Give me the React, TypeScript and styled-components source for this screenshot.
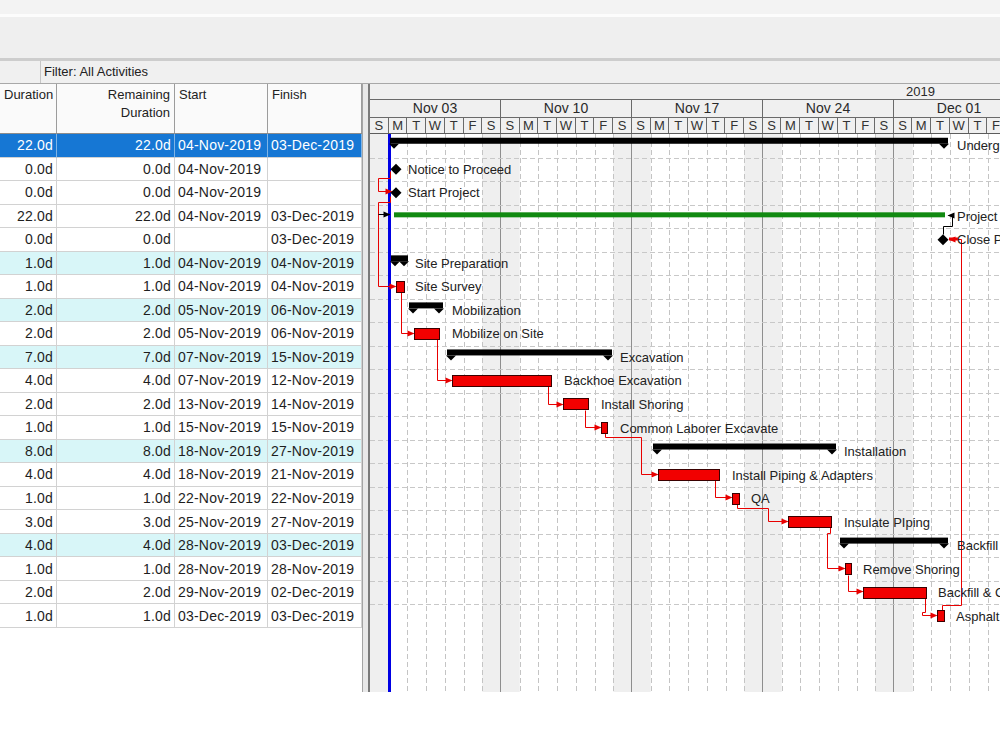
import styled, { createGlobalStyle } from "styled-components";

const DAY = 131 / 7;
const ROW_H = 23.52;
const X0 = 370;
const Y0 = 134;
const CHART_W = 630;
const BODY_H = 558;

const GlobalStyle = createGlobalStyle`
  * { box-sizing: border-box; }
  body {
    margin: 0;
    background: #fff;
    font-family: "Liberation Sans", Arial, sans-serif;
  }
`;

type Kind = "selected" | "wbs" | "plain";
type Bar =
  | { type: "summary"; x1: number; x2: number }
  | { type: "task"; x1: number; x2: number }
  | { type: "green"; x1: number; x2: number }
  | { type: "milestone"; x: number };

interface Activity {
  dur: string;
  rem: string;
  start: string;
  finish: string;
  kind: Kind;
  bar: Bar;
  label: string;
  lx: number;
}

const activities: Activity[] = [
  { dur: "22.0d", rem: "22.0d", start: "04-Nov-2019", finish: "03-Dec-2019", kind: "selected", bar: { type: "summary", x1: 390, x2: 948 }, label: "Underground Utilities", lx: 957 },
  { dur: "0.0d", rem: "0.0d", start: "04-Nov-2019", finish: "", kind: "plain", bar: { type: "milestone", x: 396 }, label: "Notice to Proceed", lx: 408 },
  { dur: "0.0d", rem: "0.0d", start: "04-Nov-2019", finish: "", kind: "plain", bar: { type: "milestone", x: 396 }, label: "Start Project", lx: 408 },
  { dur: "22.0d", rem: "22.0d", start: "04-Nov-2019", finish: "03-Dec-2019", kind: "plain", bar: { type: "green", x1: 394, x2: 945 }, label: "Project Complete", lx: 957 },
  { dur: "0.0d", rem: "0.0d", start: "", finish: "03-Dec-2019", kind: "plain", bar: { type: "milestone", x: 943 }, label: "Close Project", lx: 957 },
  { dur: "1.0d", rem: "1.0d", start: "04-Nov-2019", finish: "04-Nov-2019", kind: "wbs", bar: { type: "summary", x1: 391, x2: 408 }, label: "Site Preparation", lx: 415 },
  { dur: "1.0d", rem: "1.0d", start: "04-Nov-2019", finish: "04-Nov-2019", kind: "plain", bar: { type: "task", x1: 396, x2: 404 }, label: "Site Survey", lx: 415 },
  { dur: "2.0d", rem: "2.0d", start: "05-Nov-2019", finish: "06-Nov-2019", kind: "wbs", bar: { type: "summary", x1: 409, x2: 443 }, label: "Mobilization", lx: 452 },
  { dur: "2.0d", rem: "2.0d", start: "05-Nov-2019", finish: "06-Nov-2019", kind: "plain", bar: { type: "task", x1: 414, x2: 439 }, label: "Mobilize on Site", lx: 452 },
  { dur: "7.0d", rem: "7.0d", start: "07-Nov-2019", finish: "15-Nov-2019", kind: "wbs", bar: { type: "summary", x1: 447, x2: 612 }, label: "Excavation", lx: 620 },
  { dur: "4.0d", rem: "4.0d", start: "07-Nov-2019", finish: "12-Nov-2019", kind: "plain", bar: { type: "task", x1: 452, x2: 551 }, label: "Backhoe Excavation", lx: 564 },
  { dur: "2.0d", rem: "2.0d", start: "13-Nov-2019", finish: "14-Nov-2019", kind: "plain", bar: { type: "task", x1: 563, x2: 588 }, label: "Install Shoring", lx: 601 },
  { dur: "1.0d", rem: "1.0d", start: "15-Nov-2019", finish: "15-Nov-2019", kind: "plain", bar: { type: "task", x1: 601, x2: 607 }, label: "Common Laborer Excavate", lx: 620 },
  { dur: "8.0d", rem: "8.0d", start: "18-Nov-2019", finish: "27-Nov-2019", kind: "wbs", bar: { type: "summary", x1: 653, x2: 836 }, label: "Installation", lx: 844 },
  { dur: "4.0d", rem: "4.0d", start: "18-Nov-2019", finish: "21-Nov-2019", kind: "plain", bar: { type: "task", x1: 658, x2: 719 }, label: "Install Piping & Adapters", lx: 732 },
  { dur: "1.0d", rem: "1.0d", start: "22-Nov-2019", finish: "22-Nov-2019", kind: "plain", bar: { type: "task", x1: 732, x2: 739 }, label: "QA", lx: 751 },
  { dur: "3.0d", rem: "3.0d", start: "25-Nov-2019", finish: "27-Nov-2019", kind: "plain", bar: { type: "task", x1: 788, x2: 831 }, label: "Insulate PIping", lx: 844 },
  { dur: "4.0d", rem: "4.0d", start: "28-Nov-2019", finish: "03-Dec-2019", kind: "wbs", bar: { type: "summary", x1: 840, x2: 948 }, label: "Backfill", lx: 957 },
  { dur: "1.0d", rem: "1.0d", start: "28-Nov-2019", finish: "28-Nov-2019", kind: "plain", bar: { type: "task", x1: 845, x2: 851 }, label: "Remove Shoring", lx: 863 },
  { dur: "2.0d", rem: "2.0d", start: "29-Nov-2019", finish: "02-Dec-2019", kind: "plain", bar: { type: "task", x1: 863, x2: 926 }, label: "Backfill & C", lx: 938 },
  { dur: "1.0d", rem: "1.0d", start: "03-Dec-2019", finish: "03-Dec-2019", kind: "plain", bar: { type: "task", x1: 937, x2: 944 }, label: "Asphalt", lx: 956 },
];

// relationship lines, page coordinates
type Link = { pts: [number, number][]; color: string; dir: "r" | "l" };
const RED = "#e80000";
const links: Link[] = [
  { pts: [[390, 171], [390, 178], [378, 178], [378, 191], [391, 191]], color: RED, dir: "r" },
  { pts: [[390, 196], [390, 202], [378, 202], [378, 286], [395, 286]], color: RED, dir: "r" },
  { pts: [[401, 292], [401, 333], [413, 333]], color: RED, dir: "r" },
  { pts: [[437, 339], [437, 380], [451, 380]], color: RED, dir: "r" },
  { pts: [[548, 386], [548, 404], [562, 404]], color: RED, dir: "r" },
  { pts: [[585, 410], [585, 427], [600, 427]], color: RED, dir: "r" },
  { pts: [[605, 433], [605, 437], [641, 437], [641, 474], [657, 474]], color: RED, dir: "r" },
  { pts: [[715, 480], [715, 497], [731, 497]], color: RED, dir: "r" },
  { pts: [[737, 504], [737, 508], [768, 508], [768, 521], [787, 521]], color: RED, dir: "r" },
  { pts: [[830, 527], [830, 533], [827, 533], [827, 568], [844, 568]], color: RED, dir: "r" },
  { pts: [[848, 575], [848, 591], [862, 591]], color: RED, dir: "r" },
  { pts: [[925, 598], [925, 612], [922, 612], [922, 615], [936, 615]], color: RED, dir: "r" },
  { pts: [[942, 610], [942, 605], [961, 605], [961, 239], [949, 239]], color: RED, dir: "l" },
  { pts: [[943, 234], [943, 226], [952, 226], [952, 215], [948, 215]], color: "#000", dir: "l" },
  { pts: [[378, 214], [389, 214]], color: "#000", dir: "r" },
];

const weeks = ["Nov 03", "Nov 10", "Nov 17", "Nov 24", "Dec 01"];
const dayLetters = ["S", "M", "T", "W", "T", "F", "S"];

const Page = styled.div`
  width: 1000px;
  height: 750px;
  background: #fff;
  overflow: hidden;
  color: #1e1e1e;
`;

const TopStrip = styled.div`
  height: 17px;
  background: #f3f3f3;
  border-bottom: 3px solid #fcfcfc;
`;

const Toolbar = styled.div`
  height: 44px;
  background: #efefef;
  border-bottom: 3px solid #cdcdcd;
`;

const FilterBar = styled.div`
  height: 23px;
  display: flex;
  background: #f0f0f0;
  border-bottom: 1px solid #a8a8a8;
  font-size: 13px;
`;

const FilterBlank = styled.div`
  width: 41px;
  border-right: 1px solid #c6c6c6;
`;

const FilterText = styled.div`
  padding-left: 3px;
  line-height: 22px;
  color: #222;
`;

const Main = styled.div`
  display: flex;
  height: 608px;
`;

const TablePane = styled.div`
  width: 362px;
  display: flex;
  flex-direction: column;
`;

const cols = "57px 118px 93px 94px";

const HeadRow = styled.div`
  display: grid;
  grid-template-columns: ${cols};
  height: 50px;
  background: #fafafa;
  border-bottom: 1px solid #8c8c8c;
`;

const HeadCell = styled.div<{ $right?: boolean }>`
  border-right: 1px solid #9c9c9c;
  padding: 2px 4px 0 4px;
  font-size: 13px;
  line-height: 18px;
  text-align: ${(p) => (p.$right ? "right" : "left")};
  color: #222;
`;

const rowBg: Record<Kind, string> = {
  selected: "#1677d4",
  wbs: "#d8f6f8",
  plain: "#fff",
};

const BodyRow = styled.div<{ $kind: Kind }>`
  display: grid;
  grid-template-columns: ${cols};
  height: ${ROW_H}px;
  background: ${(p) => rowBg[p.$kind]};
  color: ${(p) => (p.$kind === "selected" ? "#fff" : "#1e1e1e")};
`;

const Cell = styled.div<{ $right?: boolean; $sel?: boolean }>`
  border-right: 1px solid ${(p) => (p.$sel ? "#7fb4e6" : "#d2d2d2")};
  border-bottom: 1px solid #d2d2d2;
  padding: 0 3px 0 3px;
  font-size: 14px;
  letter-spacing: 0.2px;
  display: flex;
  align-items: center;
  justify-content: ${(p) => (p.$right ? "flex-end" : "flex-start")};
  white-space: nowrap;
  overflow: hidden;
`;

const Splitter = styled.div`
  width: 8px;
  background: #e8e8e8;
  border-left: 1px solid #a4a4a4;
  border-right: 2px solid #7a7a7a;
`;

const ChartPane = styled.div`
  width: ${CHART_W}px;
  display: flex;
  flex-direction: column;
  overflow: hidden;
`;

const TimeHeader = styled.div`
  height: 50px;
  background: #f0f0f0;
  color: #2a2a2a;
  border-bottom: 1px solid #5c5c5c;
`;

const YearRow = styled.div`
  height: 16px;
  border-bottom: 1px solid #6a6a6a;
  font-size: 13px;
  line-height: 15px;
  padding-left: 536px;
`;

const WeekRow = styled.div`
  display: grid;
  grid-template-columns: repeat(5, 131px);
  height: 18px;
  border-bottom: 1px solid #6a6a6a;
`;

const WeekCell = styled.div`
  border-right: 1px solid #6a6a6a;
  text-align: center;
  font-size: 14px;
  line-height: 17px;
`;

const DayRow = styled.div`
  display: grid;
  grid-template-columns: repeat(35, ${DAY}px);
  height: 15px;
`;

const DayCell = styled.div`
  border-right: 1px solid #6a6a6a;
  text-align: center;
  font-size: 13px;
  line-height: 15px;
  color: #333;
`;

const ChartBody = styled.svg`
  display: block;
  width: ${CHART_W}px;
  height: ${BODY_H}px;
  overflow: hidden;
  font-family: "Liberation Sans", Arial, sans-serif;
`;

const rx = (x: number) => x - X0;
const ry = (y: number) => y - Y0;
const cyOf = (i: number) => ROW_H * (i + 0.5);
const px = (v: number) => Math.round(v) + 0.5;

function BarShape({ bar, cy }: { bar: Bar; cy: number }) {
  if (bar.type === "milestone") {
    const x = rx(bar.x);
    return <polygon points={`${x},${cy - 5.5} ${x + 5.5},${cy} ${x},${cy + 5.5} ${x - 5.5},${cy}`} fill="#000" />;
  }
  const x1 = rx(bar.x1);
  const x2 = rx(bar.x2);
  if (bar.type === "summary") {
    const top = cy - 8;
    const bot = cy - 2;
    return (
      <g fill="#000">
        <rect x={x1} y={top} width={x2 - x1} height={bot - top} />
        <polygon points={`${x1 - 1},${bot} ${x1 + 9},${bot} ${x1 + 4},${bot + 5}`} />
        <polygon points={`${x2 - 9},${bot} ${x2 + 1},${bot} ${x2 - 4},${bot + 5}`} />
      </g>
    );
  }
  if (bar.type === "green") {
    return <rect x={x1} y={cy - 4} width={x2 - x1} height={5} fill="#118a11" />;
  }
  return <rect x={x1 + 0.5} y={Math.round(cy - 6) + 0.5} width={x2 - x1} height={11} fill="#f20000" stroke="#3a0000" strokeWidth={1} />;
}

function LinkLine({ link }: { link: Link }) {
  const pts = link.pts.map(([x, y]) => [px(rx(x)), px(ry(y))] as [number, number]);
  const [ex, ey] = pts[pts.length - 1];
  const head =
    link.dir === "r"
      ? `${ex + 1},${ey} ${ex - 6},${ey - 3} ${ex - 6},${ey + 3}`
      : `${ex - 1},${ey} ${ex + 6},${ey - 3} ${ex + 6},${ey + 3}`;
  return (
    <g>
      <polyline points={pts.map((p) => p.join(",")).join(" ")} fill="none" stroke={link.color} strokeWidth={1} />
      <polygon points={head} fill={link.color} />
    </g>
  );
}

function GanttBody() {
  const days = Array.from({ length: 35 }, (_, d) => d);
  return (
    <ChartBody viewBox={`0 0 ${CHART_W} ${BODY_H}`}>
      <rect width={CHART_W} height={BODY_H} fill="#fff" />
      {days
        .filter((d) => d % 7 === 0 || d % 7 === 6)
        .map((d) => (
          <rect key={`we${d}`} x={d * DAY} y={0} width={DAY} height={BODY_H} fill="#efefef" />
        ))}
      {days
        .filter((d) => d % 7 !== 0)
        .map((d) => (
          <line key={`vd${d}`} x1={px(d * DAY)} x2={px(d * DAY)} y1={0} y2={BODY_H} stroke="#c4c4c4" strokeDasharray="5 3" />
        ))}
      {[1, 2, 3, 4].map((k) => (
        <line key={`wk${k}`} x1={px(131 * k) - 1} x2={px(131 * k) - 1} y1={0} y2={BODY_H} stroke="#8e8e8e" />
      ))}
      {Array.from({ length: 20 }, (_, i) => i + 1).map((i) => (
        <line key={`hz${i}`} x1={0} x2={CHART_W} y1={px(i * ROW_H)} y2={px(i * ROW_H)} stroke="#c8c8c8" strokeDasharray="5 3" />
      ))}
      <rect x={18} y={0} width={3} height={BODY_H} fill="#0000e4" />
      {links.map((l, i) => (
        <LinkLine key={`ln${i}`} link={l} />
      ))}
      <rect x={rx(949)} y={ry(237.5)} width={9} height={3} fill={RED} />
      {activities.map((a, i) => (
        <BarShape key={`b${i}`} bar={a.bar} cy={cyOf(i)} />
      ))}
      {activities.map((a, i) => (
        <text key={`t${i}`} x={rx(a.lx)} y={cyOf(i) + 4.5} fontSize={13} fill="#222">
          {a.label}
        </text>
      ))}
    </ChartBody>
  );
}

export default function App() {
  return (
    <Page>
      <GlobalStyle />
      <TopStrip />
      <Toolbar />
      <FilterBar>
        <FilterBlank />
        <FilterText>Filter: All Activities</FilterText>
      </FilterBar>
      <Main>
        <TablePane>
          <HeadRow>
            <HeadCell $right>Duration</HeadCell>
            <HeadCell $right>
              Remaining
              <br />
              Duration
            </HeadCell>
            <HeadCell>Start</HeadCell>
            <HeadCell>Finish</HeadCell>
          </HeadRow>
          {activities.map((a, i) => {
            const sel = a.kind === "selected";
            return (
              <BodyRow key={`r${i}`} $kind={a.kind}>
                <Cell $right $sel={sel}>{a.dur}</Cell>
                <Cell $right $sel={sel}>{a.rem}</Cell>
                <Cell $sel={sel}>{a.start}</Cell>
                <Cell $sel={sel}>{a.finish}</Cell>
              </BodyRow>
            );
          })}
        </TablePane>
        <Splitter />
        <ChartPane>
          <TimeHeader>
            <YearRow>2019</YearRow>
            <WeekRow>
              {weeks.map((w) => (
                <WeekCell key={w}>{w}</WeekCell>
              ))}
            </WeekRow>
            <DayRow>
              {Array.from({ length: 35 }, (_, d) => (
                <DayCell key={`d${d}`}>{dayLetters[d % 7]}</DayCell>
              ))}
            </DayRow>
          </TimeHeader>
          <GanttBody />
        </ChartPane>
      </Main>
    </Page>
  );
}
